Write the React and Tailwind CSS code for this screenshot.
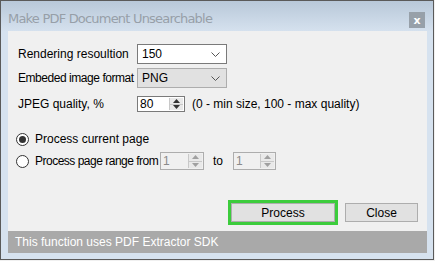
import React from "react";

const UI = { fontFamily: '"Liberation Sans", Arial, sans-serif' };

function Chevron() {
  return (
    <svg width="9" height="5" viewBox="0 0 9 5" className="shrink-0">
      <polyline points="0.5,0.5 4.5,4.5 8.5,0.5" fill="none" stroke="#555" strokeWidth="1" />
    </svg>
  );
}

function Select({ value, disabled }) {
  return (
    <div
      className={
        "w-[90px] h-[20px] flex items-center justify-between pl-[4px] pr-[6px] border " +
        (disabled ? "bg-[#e1e1e1] border-[#adadad]" : "bg-white border-[#7a7a7a]")
      }
    >
      <span className="text-[12px] text-black leading-none">{value}</span>
      <Chevron />
    </div>
  );
}

function SpinArrows({ disabled }) {
  const c = disabled ? "#a0a0a0" : "#333";
  return (
    <div className="w-[14px] h-full flex flex-col border-l border-[#c8c8c8] bg-[#e9e9e9]">
      <div className="flex-1 flex items-center justify-center border-b border-[#c8c8c8]">
        <svg width="7" height="4" viewBox="0 0 7 4"><polygon points="0,4 3.5,0 7,4" fill={c} /></svg>
      </div>
      <div className="flex-1 flex items-center justify-center">
        <svg width="7" height="4" viewBox="0 0 7 4"><polygon points="0,0 3.5,4 7,0" fill={c} /></svg>
      </div>
    </div>
  );
}

function Spin({ value, width, height, disabled }) {
  return (
    <div
      className={
        "flex items-stretch border shrink-0 " +
        (disabled ? "bg-[#f0f0f0] border-[#adadad]" : "bg-white border-[#7a7a7a]")
      }
      style={{ width, height }}
    >
      <div className={"flex-1 flex items-center pl-[2px] text-[12px] leading-none " + (disabled ? "text-[#8a8a8a]" : "text-black")}>
        {value}
      </div>
      <div className="py-[1px] pr-[1px]">
        <SpinArrows disabled={disabled} />
      </div>
    </div>
  );
}

function Radio({ checked }) {
  return (
    <div className="w-[13px] h-[13px] rounded-full border border-[#333] bg-white flex items-center justify-center shrink-0">
      {checked && <div className="w-[7px] h-[7px] rounded-full bg-[#333]" />}
    </div>
  );
}

export default function App() {
  return (
    <div className="w-[435px] h-[261px] bg-[#f0f0f0]" style={UI}>
      <div className="w-[434px] h-[260px] border border-[#5a5a5a] flex flex-col bg-[#d6e2ef]">
        {/* Title bar */}
        <div className="h-[30px] flex items-center justify-between pl-[7px] pr-[8px] bg-gradient-to-b from-[#b8c8d9] to-[#d5e1ee] shrink-0">
          <span
            className="text-[13px] text-[#979fa8] leading-none mt-[5px] tracking-[-0.8px]"
            style={{ fontFamily: '"DejaVu Sans", Verdana, sans-serif' }}
          >
            Make PDF Document Unsearchable
          </span>
          <div className="w-[16px] h-[16px] bg-[#97a0a9] flex items-center justify-center mt-[8px]">
            <span className="text-white text-[11px] font-bold leading-none" style={{ fontFamily: '"DejaVu Sans", sans-serif' }}>x</span>
          </div>
        </div>

        {/* Client */}
        <div className="flex-1 ml-[7px] mr-[6px] mb-[6px] bg-[#f0f0f0] flex flex-col">
          <div className="pl-[10px] flex flex-col text-[12px] text-black">
            <div className="mt-[13px] h-[20px] flex items-center">
              <span className="w-[119px] leading-none">Rendering resoultion</span>
              <Select value="150" />
            </div>
            <div className="mt-[4px] h-[20px] flex items-center">
              <span className="w-[119px] leading-none whitespace-nowrap tracking-[-0.45px]">Embeded image format</span>
              <Select value="PNG" disabled />
            </div>
            <div className="mt-[8px] h-[16px] flex items-center">
              <span className="w-[119px] leading-none">JPEG quality, %</span>
              <Spin value="80" width={48} height={16} />
              <span className="ml-[7px] leading-none">(0 - min size, 100 - max quality)</span>
            </div>
          </div>

          <div className="pl-[8px] flex flex-col text-[12px] text-black">
            <div className="mt-[19px] h-[16px] flex items-center">
              <Radio checked />
              <span className="ml-[6px] leading-none">Process current page</span>
            </div>
            <div className="mt-[5px] h-[18px] flex items-center">
              <Radio />
              <span className="ml-[6px] w-[125px] leading-none whitespace-nowrap tracking-[-0.5px]">Process page range from</span>
              <Spin value="1" width={44} height={18} disabled />
              <span className="ml-[9px] w-[20px] leading-none">to</span>
              <Spin value="1" width={43} height={18} disabled />
            </div>
          </div>

          <div className="mt-auto h-[25px] flex items-center justify-end pr-[9px] gap-[7px]">
            <div className="border-[3px] border-[#3ccc3c]">
              <div className="w-[104px] h-[19px] bg-[#e1e1e1] border border-[#adadad] flex items-center justify-center text-[12px] leading-none text-black">
                Process
              </div>
            </div>
            <div className="w-[73px] h-[19px] bg-[#e1e1e1] border border-[#adadad] flex items-center justify-center text-[12px] leading-none text-black">
              Close
            </div>
          </div>

          <div className="mt-[6px] h-[22px] bg-[#a9a9a9] flex items-center pl-[7px] text-white text-[12px] leading-none">
            This function uses PDF Extractor SDK
          </div>
        </div>
      </div>
    </div>
  );
}
